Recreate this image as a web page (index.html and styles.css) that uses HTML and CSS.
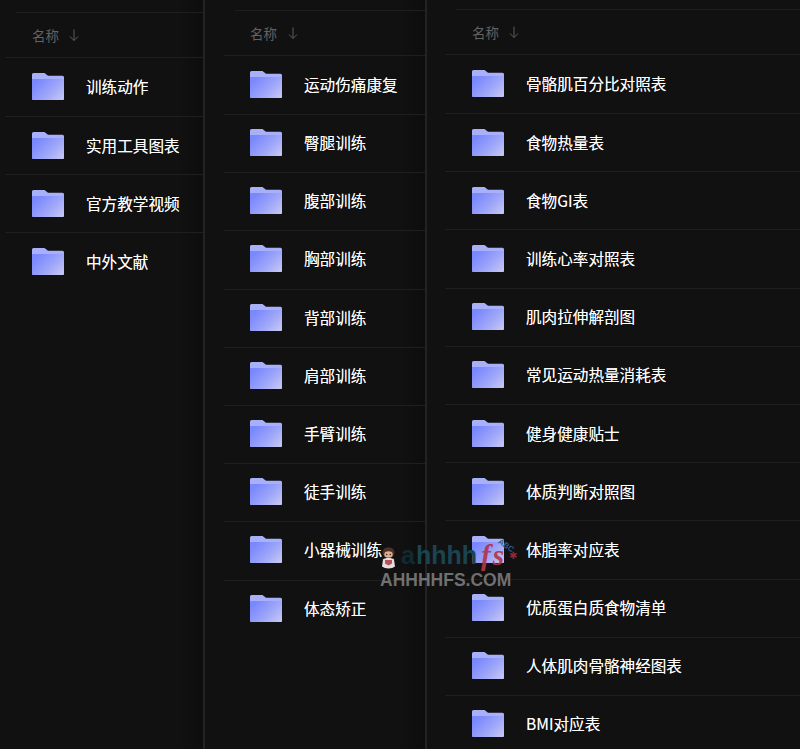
FILE: index.html
```html
<!DOCTYPE html>
<html lang="zh-CN">
<head>
<meta charset="utf-8">
<title>名称</title>
<link rel="stylesheet" href="styles.css">
</head>
<body>
<svg class="defs" width="0" height="0" aria-hidden="true">
  <defs>
    <linearGradient id="fg" x1="0" y1="0.35" x2="1" y2="1">
      <stop offset="0" stop-color="#7a88fd"/>
      <stop offset="0.55" stop-color="#a0a8f8"/>
      <stop offset="1" stop-color="#c9caf3"/>
    </linearGradient>
    <symbol id="folder" viewBox="0 0 32 27">
      <path d="M1.5 0H12.5L16 2.8H30.5A1.5 1.5 0 0 1 32 4.3V25.5A1.5 1.5 0 0 1 30.5 27H1.5A1.5 1.5 0 0 1 0 25.5V1.5A1.5 1.5 0 0 1 1.5 0Z" fill="#a9b0fa"/>
      <path d="M0 6H32V25.5A1.5 1.5 0 0 1 30.5 27H1.5A1.5 1.5 0 0 1 0 25.5Z" fill="url(#fg)"/>
    </symbol>
    <symbol id="arrow" viewBox="0 0 12 14">
      <path d="M6 1.5V12.5M2 8.5L6 12.5L10 8.5" fill="none" stroke="currentColor" stroke-width="1"/>
    </symbol>
  </defs>
</svg>
<main class="columns">
  <section class="panel panel-one">
    <header class="head"><span>名称</span><svg class="arrow"><use href="#arrow"/></svg></header>
    <ul class="list">
      <li class="row"><svg class="folder"><use href="#folder"/></svg><span>训练动作</span></li>
      <li class="row"><svg class="folder"><use href="#folder"/></svg><span>实用工具图表</span></li>
      <li class="row"><svg class="folder"><use href="#folder"/></svg><span>官方教学视频</span></li>
      <li class="row"><svg class="folder"><use href="#folder"/></svg><span>中外文献</span></li>
    </ul>
  </section>
  <section class="panel panel-two">
    <header class="head"><span>名称</span><svg class="arrow"><use href="#arrow"/></svg></header>
    <ul class="list">
      <li class="row"><svg class="folder"><use href="#folder"/></svg><span>运动伤痛康复</span></li>
      <li class="row"><svg class="folder"><use href="#folder"/></svg><span>臀腿训练</span></li>
      <li class="row"><svg class="folder"><use href="#folder"/></svg><span>腹部训练</span></li>
      <li class="row"><svg class="folder"><use href="#folder"/></svg><span>胸部训练</span></li>
      <li class="row"><svg class="folder"><use href="#folder"/></svg><span>背部训练</span></li>
      <li class="row"><svg class="folder"><use href="#folder"/></svg><span>肩部训练</span></li>
      <li class="row"><svg class="folder"><use href="#folder"/></svg><span>手臂训练</span></li>
      <li class="row"><svg class="folder"><use href="#folder"/></svg><span>徒手训练</span></li>
      <li class="row"><svg class="folder"><use href="#folder"/></svg><span>小器械训练</span></li>
      <li class="row"><svg class="folder"><use href="#folder"/></svg><span>体态矫正</span></li>
    </ul>
  </section>
  <section class="panel panel-three">
    <header class="head"><span>名称</span><svg class="arrow"><use href="#arrow"/></svg></header>
    <ul class="list">
      <li class="row"><svg class="folder"><use href="#folder"/></svg><span>骨骼肌百分比对照表</span></li>
      <li class="row"><svg class="folder"><use href="#folder"/></svg><span>食物热量表</span></li>
      <li class="row"><svg class="folder"><use href="#folder"/></svg><span>食物GI表</span></li>
      <li class="row"><svg class="folder"><use href="#folder"/></svg><span>训练心率对照表</span></li>
      <li class="row"><svg class="folder"><use href="#folder"/></svg><span>肌肉拉伸解剖图</span></li>
      <li class="row"><svg class="folder"><use href="#folder"/></svg><span>常见运动热量消耗表</span></li>
      <li class="row"><svg class="folder"><use href="#folder"/></svg><span>健身健康贴士</span></li>
      <li class="row"><svg class="folder"><use href="#folder"/></svg><span>体质判断对照图</span></li>
      <li class="row"><svg class="folder"><use href="#folder"/></svg><span>体脂率对应表</span></li>
      <li class="row"><svg class="folder"><use href="#folder"/></svg><span>优质蛋白质食物清单</span></li>
      <li class="row"><svg class="folder"><use href="#folder"/></svg><span>人体肌肉骨骼神经图表</span></li>
      <li class="row"><svg class="folder"><use href="#folder"/></svg><span>BMI对应表</span></li>
    </ul>
  </section>
</main>
<aside class="mark">
  <svg class="chibi" viewBox="0 0 15 22" aria-hidden="true">
    <ellipse cx="7.5" cy="5.5" rx="6" ry="5.2" fill="#4f3024"/>
    <ellipse cx="7.5" cy="7.5" rx="4.2" ry="3.2" fill="#dcae92"/>
    <circle cx="5.7" cy="7.5" r=".7" fill="#2a1a14"/>
    <circle cx="9.3" cy="7.5" r=".7" fill="#2a1a14"/>
    <path d="M2 12.5C3 10.5 12 10.5 13 12.5L14 19.5C11 22 4 22 1 19.5Z" fill="#e8dcdc"/>
    <path d="M4 13H11V16.5L7.5 18.5 4 16.5Z" fill="#b8505f"/>
  </svg>
  <div class="logo"><span class="dim">a</span><span class="teal">hhhh</span><span class="red">fs</span></div>
  <span class="tag">ABC</span>
  <span class="star">&#10033;</span>
  <div class="domain">AHHHHFS.COM</div>
</aside>
</body>
</html>
```

FILE: styles.css
```css
* { box-sizing: border-box; }
html, body { margin: 0; padding: 0; }
body {
  width: 800px;
  height: 749px;
  overflow: hidden;
  position: relative;
  background: #111112;
  font-family: "Noto Sans CJK SC", "Noto Sans", sans-serif;
  color: #fff;
}
.defs { position: absolute; }
.columns { display: flex; height: 749px; }
.panel {
  flex: none;
  height: 749px;
  border-right: 2px solid #232324;
  background: linear-gradient(to right, #111112 0, #111112 88%, #0d0d0e 100%);
  overflow: hidden;
}
.panel-one { width: 205px; padding: 12px 0 0 5px; }
.panel-two { width: 222px; padding: 10px 0 0 19px; }
.panel-three { width: 373px; padding: 9px 0 0 18px; border-right: 0; background: #111112; }

.head {
  display: flex;
  align-items: center;
  gap: 9px;
  height: 45px;
  border-top: 1px solid #1f1f20;
  color: #636364;
  font-size: 13.5px;
  margin-left: 11px;
  padding: 0 0 1px 16px;
}
.panel-two .head { padding-left: 15px; gap: 10px; }
.arrow { width: 12px; height: 14px; color: #5c5c5d; }

.list { list-style: none; margin: 0; padding: 0; }
.row {
  display: flex;
  align-items: center;
  height: 58px;
  padding: 0 0 1px 27px;
  border-top: 1px solid #1f1f20;
  font-size: 15.6px;
  line-height: 22px;
  text-shadow: 0 0 0.6px rgba(255, 255, 255, 0.6);
}
.row span { padding-bottom: 1px; }
.panel-two .row { height: 58.2px; padding: 0 0 2px 26px; }
.panel-three .row { height: 58.2px; }
.panel .row:first-child { height: 59px; }
.folder { flex: none; width: 32px; height: 27px; margin-right: 22px; }

.mark {
  position: absolute;
  left: 380px;
  top: 540px;
  width: 140px;
  height: 50px;
  pointer-events: none;
}
.chibi { position: absolute; left: 1px; top: 7px; width: 15px; height: 22px; }
.logo {
  position: absolute;
  left: 21px;
  top: 0;
  height: 30px;
  display: flex;
  align-items: center;
  font-family: "Liberation Sans", sans-serif;
  font-weight: 700;
  font-size: 25px;
  line-height: 30px;
  white-space: nowrap;
}
.dim { color: #102a33; margin-right: 1px; }
.teal { color: #1a4550; }
.red {
  color: #b2354a;
  font-family: "Liberation Serif", serif;
  font-style: italic;
  font-size: 29px;
  letter-spacing: 2px;
  margin-left: 4px;
  opacity: 0.92;
}
.tag {
  position: absolute;
  left: 117px;
  top: 1px;
  font: 700 8px/10px "Liberation Sans", sans-serif;
  color: #2f5d92;
  transform: rotate(35deg);
}
.star {
  position: absolute;
  left: 129px;
  top: 11px;
  font: 10px/10px "DejaVu Sans", sans-serif;
  color: #8a2a3a;
}
.domain {
  position: absolute;
  left: 0;
  top: 33px;
  font-family: "Liberation Sans", sans-serif;
  font-weight: 700;
  font-size: 17.5px;
  line-height: 14px;
  color: rgba(150, 150, 150, 0.72);
  white-space: nowrap;
}
```
